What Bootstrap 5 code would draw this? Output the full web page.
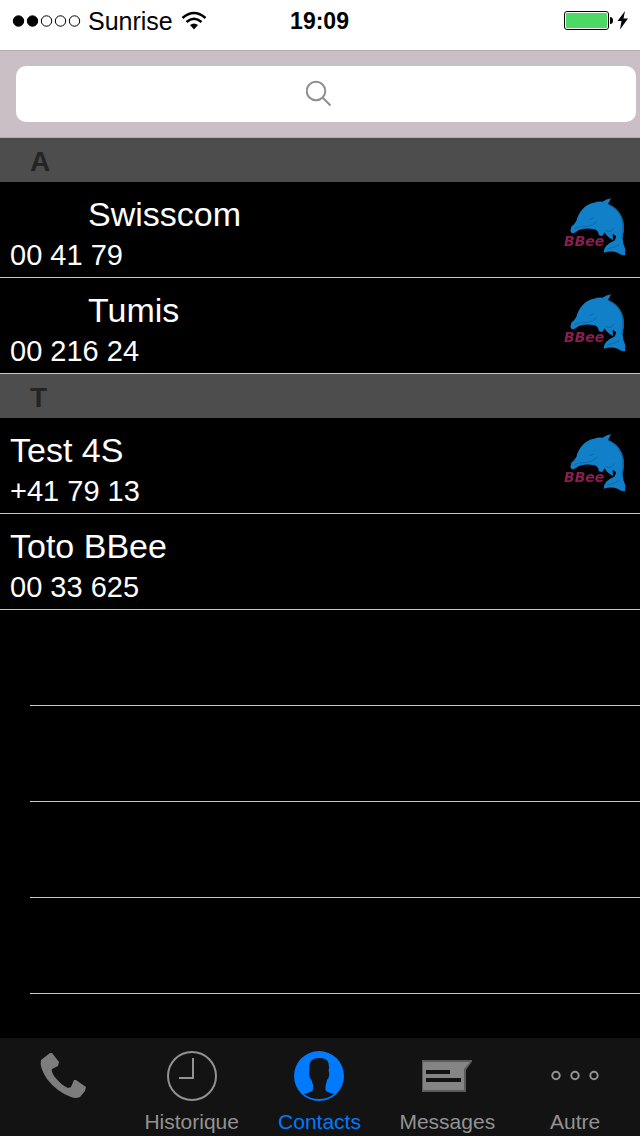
<!DOCTYPE html>
<html lang="fr">
<head>
<meta charset="utf-8">
<meta name="viewport" content="width=device-width, initial-scale=1">
<title>Contacts</title>
<link href="https://cdn.jsdelivr.net/npm/bootstrap@5.3.0/dist/css/bootstrap.min.css" rel="stylesheet">
<style>
body{font-family:"Liberation Sans",Arial,sans-serif;background:#000;color:#fff}
svg{display:block;flex:none}
.status-bar{background:#fff;color:#000;height:50px;padding:0 11px 8px 12px;font-size:25px;line-height:42px}
.carrier{margin:0 8px 0 6px}
.status-time{font-size:23px;padding-right:2px}
.search-bar{background:#cabfc5;border-top:1px solid #b5aaab;border-bottom:1px solid #b5aaab;padding:15px 4px 15px 16px}
.search-bar .form-control{height:56px;border:0;border-radius:10px;font-size:28px;background:#fff}
.search-icon{pointer-events:none}
.section-title{background:#4d4d4d;color:#242424;font-size:28px;font-weight:700;line-height:41px;padding:3px 30px 0;margin:0}
.contact{height:96px;padding:11px 13px 0 10px;border-bottom:1px solid #c8c7cc;color:#fff}
.contact-name{font-size:34px;line-height:42px}
.contact-name.inset{padding-left:78px}
.contact-phone{font-size:29px;line-height:40px}
.contact-logo{margin-top:4px;filter:blur(.5px)}
.logo-text{left:2px;bottom:9px;font:italic 700 14px/14px "DejaVu Sans",sans-serif;color:#8c1d50}
.blank-row{height:96px;margin-left:30px;border-bottom:1px solid #c8c7cc}
.tab-bar{background:#131313;height:98px;padding-right:1px}
.tab{color:#929292;font-size:21px;line-height:24px;flex:1 1 0;border-radius:0}
.tab-icon{height:72px;padding-top:13px}
.tab.active{color:#007aff}
</style>
<script src="https://cdn.jsdelivr.net/npm/bootstrap@5.3.0/dist/js/bootstrap.bundle.min.js"></script>
</head>
<body>
<svg width="0" height="0" class="position-absolute" aria-hidden="true">
  <symbol id="dolphin" viewBox="6 12 195 180">
    <path fill="#1280c9" d="M31 114L34 101Q44 94 49 84C55 58 75 33 102 29Q116 24 128 26Q138 18 153 16L144 33C169 43 187 64 191 92Q193 115 188 137Q188 152 196 168L195 186Q184 188 174 180Q156 172 131 179Q130 168 139 158Q149 147 163 143Q169 137 168 129L158 122L159 141Q143 134 134 118L126 130L116 126Q117 115 104 109Q76 103 56 111Q42 122 35 121Z"/>
    <path fill="none" stroke="#0d69a8" stroke-width="3" d="M42 107Q57 99 78 101Q98 99 112 84M136 112Q154 122 164 102M143 168Q164 164 179 154M88 80L101 75"/>
    <path fill="none" stroke="#0d69a8" stroke-width="4" d="M148 36Q180 51 188 88Q191 113 185 137"/>
  </symbol>
</svg>
<div class="d-flex flex-column min-vh-100">
  <header class="status-bar row g-0">
    <div class="col d-flex align-items-center">
      <svg width="70" height="14" viewBox="0 0 70 14"><g stroke="#000" stroke-width="1"><circle cx="6.5" cy="7" r="5.2"/><circle cx="20.5" cy="7" r="5.2"/><g fill="none"><circle cx="34.5" cy="7" r="5.2"/><circle cx="48.500" cy="7" r="5.2"/><circle cx="62.500" cy="7" r="5.2"/></g></g></svg>
      <span class="carrier">Sunrise</span>
      <svg width="26" height="20" viewBox="0 0 26 20"><g fill="none" stroke="#000" stroke-width="2.600"><path d="M1.500 7Q13-3 24.500 7"/><path d="M5.500 11Q13 4.500 20.500 11"/></g><path d="M9 14Q13 11 17 14L13 18.500Z"/></svg>
    </div>
    <div class="col-auto status-time fw-bold">19:09</div>
    <div class="col d-flex align-items-center justify-content-end">
      <svg width="66" height="22" viewBox="0 0 66 22"><rect x="1.500" y="1.500" width="44" height="18" rx="2.500" fill="#fff" stroke="#000"/><rect x="3" y="3" width="41" height="15" rx="1" fill="#4cd964"/><path d="M47 7Q50 7 50 10.500Q50 14 47 14Z"/><path d="M62 1L54.500 11H58.500L57 19.500L65 8.500H60.500Z"/></svg>
    </div>
  </header>
  <form class="search-bar" role="search">
    <div class="position-relative">
      <input type="search" class="form-control" aria-label="Rechercher">
      <svg class="search-icon position-absolute top-50 start-50 translate-middle" width="40" height="28" viewBox="0 0 40 28" fill="none" stroke="#8e8e93" stroke-width="2"><circle cx="10" cy="11" r="9.300"/><path d="M16.500 17.500L24.500 25.500"/></svg>
    </div>
  </form>
  <main class="flex-grow-1">
    <h2 class="section-title">A</h2>
    <ul class="list-unstyled m-0">
      <li><a href="#" class="contact d-flex justify-content-between align-items-start text-decoration-none"><span class="d-flex flex-column"><span class="contact-name inset">Swisscom</span><span class="contact-phone">00 41 79</span></span><span class="contact-logo position-relative"><svg width="65" height="60"><use href="#dolphin"/></svg><span class="logo-text position-absolute">BBee</span></span></a></li>
      <li><a href="#" class="contact d-flex justify-content-between align-items-start text-decoration-none"><span class="d-flex flex-column"><span class="contact-name inset">Tumis</span><span class="contact-phone">00 216 24</span></span><span class="contact-logo position-relative"><svg width="65" height="60"><use href="#dolphin"/></svg><span class="logo-text position-absolute">BBee</span></span></a></li>
    </ul>
    <h2 class="section-title">T</h2>
    <ul class="list-unstyled m-0">
      <li><a href="#" class="contact d-flex justify-content-between align-items-start text-decoration-none"><span class="d-flex flex-column"><span class="contact-name">Test 4S</span><span class="contact-phone">+41 79 13</span></span><span class="contact-logo position-relative"><svg width="65" height="60"><use href="#dolphin"/></svg><span class="logo-text position-absolute">BBee</span></span></a></li>
      <li><a href="#" class="contact d-flex text-decoration-none"><span class="d-flex flex-column"><span class="contact-name">Toto BBee</span><span class="contact-phone">00 33 625</span></span></a></li>
    </ul>
    <div class="blank-row"></div>
    <div class="blank-row"></div>
    <div class="blank-row"></div>
    <div class="blank-row"></div>
  </main>
  <nav class="tab-bar d-flex" aria-label="Onglets">
    <button type="button" class="tab btn p-0 border-0 d-flex flex-column align-items-center" aria-label="Téléphone">
      <span class="tab-icon"><svg width="50" height="50" viewBox="0 0 50 50"><path fill="#7d7d7d" d="M2 9L11 2L13 2L20 11L19 15L13 18Q12 20 15 25Q22 34 29 37L32 36L35 29L37 29L47 36L46 40L41 46Q37 48 32 46Q18 41 8 28Q0 16 2 9Z"/></svg></span>
    </button>
    <button type="button" class="tab btn p-0 border-0 d-flex flex-column align-items-center">
      <span class="tab-icon"><svg width="50" height="50" viewBox="0 0 50 50" fill="none" stroke="#929292" stroke-width="2"><circle cx="25" cy="25" r="24"/><path d="M26 7V27H12"/></svg></span>Historique
    </button>
    <button type="button" class="tab active btn p-0 border-0 d-flex flex-column align-items-center" aria-current="page">
      <span class="tab-icon"><svg width="50" height="50" viewBox="0 0 50 50"><circle cx="25" cy="25" r="25" fill="#007aff"/><path fill="#131313" d="M25 7Q33 7 34.500 12Q35.500 17 34.500 20Q36 22 34.500 27L33 29L31.500 35V39Q32 41 40 43Q34 48 25 48Q16 48 10 43Q18 41 19 39V34L17.500 29L16 27Q14.500 22 15.500 20Q14.500 16 16 12Q18 7 25 7Z"/></svg></span>Contacts
    </button>
    <button type="button" class="tab btn p-0 border-0 d-flex flex-column align-items-center">
      <span class="tab-icon"><svg width="50" height="50" viewBox="0 0 50 50"><path fill="#5c5c5c" d="M0 9H51L44 19V41H0Z"/><path fill="#858585" d="M1 11H48L42 18V39H1Z"/><path fill="#131313" d="M4 19H28V23H4ZM4 27H39V31H4Z"/></svg></span>Messages
    </button>
    <button type="button" class="tab btn p-0 border-0 d-flex flex-column align-items-center">
      <span class="tab-icon"><svg width="50" height="50" viewBox="0 0 50 50" fill="none" stroke="#929292" stroke-width="2"><circle cx="6" cy="24.500" r="3.700"/><circle cx="25" cy="24.500" r="3.700"/><circle cx="44" cy="24.500" r="3.700"/></svg></span>Autre
    </button>
  </nav>
</div>
</body>
</html>
